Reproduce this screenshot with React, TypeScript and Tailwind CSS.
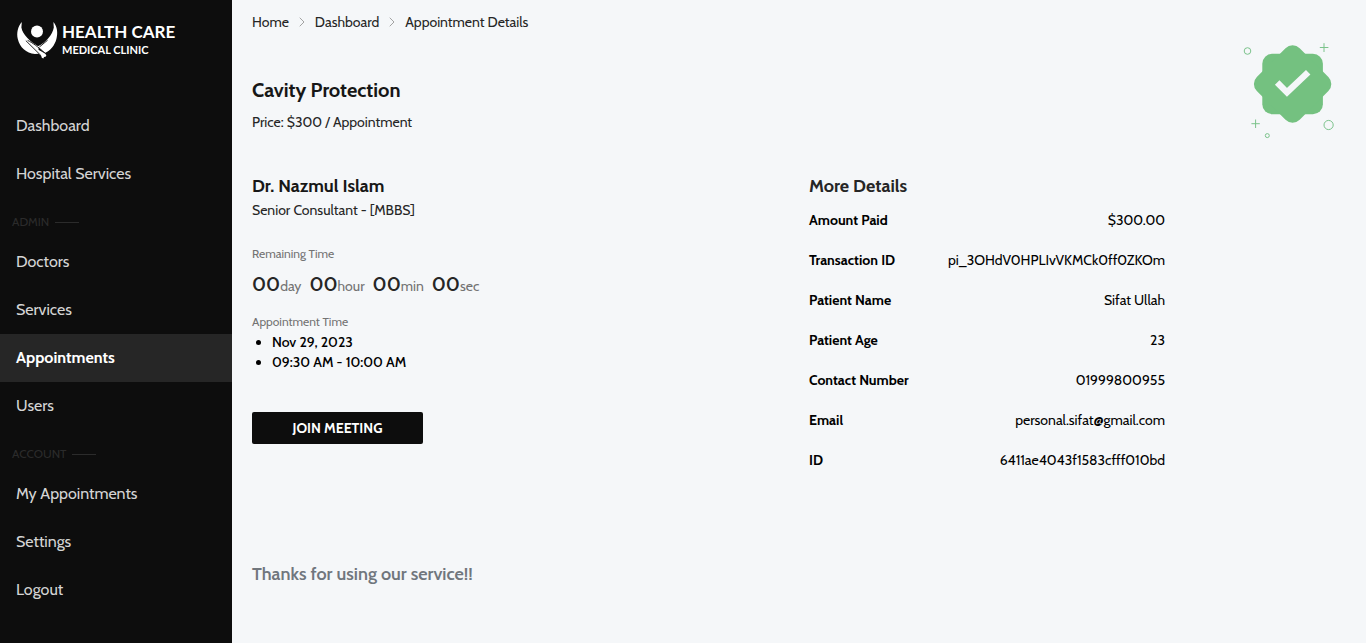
import React from "react";
import { ChevronRight } from "lucide-react";

const mainLinks = ["Dashboard", "Hospital Services"];
const adminLinks = ["Doctors", "Services", "Appointments", "Users"];
const accountLinks = ["My Appointments", "Settings", "Logout"];

const details: [string, string][] = [
  ["Amount Paid", "$300.00"],
  ["Transaction ID", "pi_3OHdV0HPLIvVKMCk0ff0ZKOm"],
  ["Patient Name", "Sifat Ullah"],
  ["Patient Age", "23"],
  ["Contact Number", "01999800955"],
  ["Email", "personal.sifat@gmail.com"],
  ["ID", "6411ae4043f1583cfff010bd"],
];

const remaining: [string, string][] = [
  ["00", "day"],
  ["00", "hour"],
  ["00", "min"],
  ["00", "sec"],
];

function LogoMark() {
  return (
    <svg viewBox="17 21 42 40" className="h-10 w-[42px]" fill="#ffffff" aria-hidden="true">
      <circle cx="38" cy="32.6" r="6" />
      <path d="M22.8 23C18.8 27.4 17.4 34 18.8 40C20.8 48.4 27 54.2 36 55L39.4 54.8L39.6 47.4C31 42.6 23.6 35.4 22.4 28.4Z" />
      <path d="M54.4 23C58.4 27.4 59 34 57.4 40C55.6 46.6 51.6 51.4 45.8 54L38.4 47.6C46.8 43.2 53.6 36 54.8 28.4Z" />
      <path d="M38 50L46 54.6L47.4 56.2L46.6 57.8L45 58L44.4 59.6L42.8 58.8L42.2 56.8L36.6 52.6Z" />
      <path
        d="M26.8 41.6L41.8 56.4M28.6 41.4C33.4 43.6 38.6 47.6 46.2 54.2M40.4 48L48.6 41.2"
        fill="none"
        stroke="#0d0d0d"
        strokeWidth="0.9"
      />
    </svg>
  );
}

function SuccessBadge() {
  return (
    <svg viewBox="0 0 100 100" className="size-[100px]" aria-hidden="true">
      <g fill="#74c180">
        <rect x="22.3" y="13.7" width="60.6" height="60.6" rx="10" />
        <rect
          x="22.3"
          y="13.7"
          width="60.6"
          height="60.6"
          rx="10"
          transform="rotate(45 52.6 44)"
        />
      </g>
      <path d="M37.2 42.6L47 52.4L68.2 32.2" fill="none" stroke="#f5f7f9" strokeWidth="6.4" />
      <g fill="none" stroke="#7cc38c" strokeWidth="1">
        <circle cx="7.5" cy="11" r="3.3" />
        <circle cx="88.6" cy="85" r="4.6" />
        <circle cx="27.3" cy="95.6" r="2" />
        <path d="M84 3.2V12M79.8 7.5H88.4M15.6 79.5V88M11.4 83.7H19.8" />
      </g>
    </svg>
  );
}

function NavLinks({ items, active }: { items: string[]; active?: string }) {
  return (
    <ul>
      {items.map((item) => (
        <li key={item}>
          <a
            href="#"
            aria-current={item === active ? "page" : undefined}
            className={
              item === active
                ? "block bg-[#262626] px-4 py-3 font-bold text-white"
                : "block px-4 py-3 text-[#d4d4d4]"
            }
          >
            {item}
          </a>
        </li>
      ))}
    </ul>
  );
}

function NavHeading({ children }: { children: React.ReactNode }) {
  return (
    <div className="flex h-10 items-center gap-1.5 px-3 pt-2 text-xs text-[#2b2b2b]">
      <span>{children}</span>
      <span className="h-px w-6 bg-[#2b2b2b]" />
    </div>
  );
}

export default function App() {
  return (
    <div className="flex min-h-screen bg-[#f5f7f9] font-[Cabin,Lato,sans-serif] text-sm text-black">
      <aside className="w-[232px] shrink-0 bg-[#0d0d0d]">
        <a href="#" className="flex items-center gap-1 px-4 pt-5 text-white">
          <LogoMark />
          <span className="flex flex-col font-[Lato,sans-serif] font-bold">
            <span className="text-[17px] leading-5">HEALTH CARE</span>
            <span className="text-[11px] leading-4">MEDICAL CLINIC</span>
          </span>
        </a>
        <nav className="pt-[42px] text-base">
          <NavLinks items={mainLinks} />
          <NavHeading>ADMIN</NavHeading>
          <NavLinks items={adminLinks} active="Appointments" />
          <NavHeading>ACCOUNT</NavHeading>
          <NavLinks items={accountLinks} />
        </nav>
      </aside>

      <main className="min-w-0 flex-1 px-5 pt-3">
        <nav aria-label="Breadcrumb" className="flex items-center gap-[5px] text-[#262626]">
          <a href="#">Home</a>
          <ChevronRight className="size-4 text-[#a3a3a3]" strokeWidth={1.5} />
          <a href="#">Dashboard</a>
          <ChevronRight className="size-4 text-[#a3a3a3]" strokeWidth={1.5} />
          <span>Appointment Details</span>
        </nav>

        <header className="flex items-start justify-between pt-2 pr-1.5">
          <div className="pt-9 text-[#262626]">
            <h1 className="text-xl font-bold text-[#171717]">Cavity Protection</h1>
            <p className="pt-2">Price: $300 / Appointment</p>
          </div>
          <SuccessBadge />
        </header>

        <div className="grid grid-cols-2 gap-5 pt-8">
          <section>
            <h2 className="text-lg leading-7 font-bold text-[#171717]">Dr. Nazmul Islam</h2>
            <p className="text-[#262626]">Senior Consultant - [MBBS]</p>
            <p className="pt-[26px] text-xs text-[#737373]">Remaining Time</p>
            <div className="flex gap-2 pt-1">
              {remaining.map(([value, unit]) => (
                <p key={unit} className="text-[#737373]">
                  <span className="text-xl leading-9 font-semibold text-[#262626]">{value}</span>
                  {unit}
                </p>
              ))}
            </div>
            <p className="pt-3 text-xs text-[#737373]">Appointment Time</p>
            <ul className="list-disc pt-0.5 pl-5 font-medium">
              <li>Nov 29, 2023</li>
              <li>09:30 AM - 10:00 AM</li>
            </ul>
            <button
              type="button"
              className="mt-10 h-8 w-[171px] rounded-xs bg-[#0d0d0d] font-bold text-white"
            >
              JOIN MEETING
            </button>
          </section>

          <section>
            <h2 className="text-lg leading-7 font-bold text-[#262626]">More Details</h2>
            <dl className="w-2/3 pr-0.5">
              {details.map(([label, value]) => (
                <div key={label} className="flex justify-between pb-5 first:pt-2.5">
                  <dt className="font-bold">{label}</dt>
                  <dd>{value}</dd>
                </div>
              ))}
            </dl>
          </section>
        </div>

        <p className="pt-[70px] text-lg leading-7 font-semibold text-[#70767d]">
          Thanks for using our service!!
        </p>
      </main>
    </div>
  );
}
